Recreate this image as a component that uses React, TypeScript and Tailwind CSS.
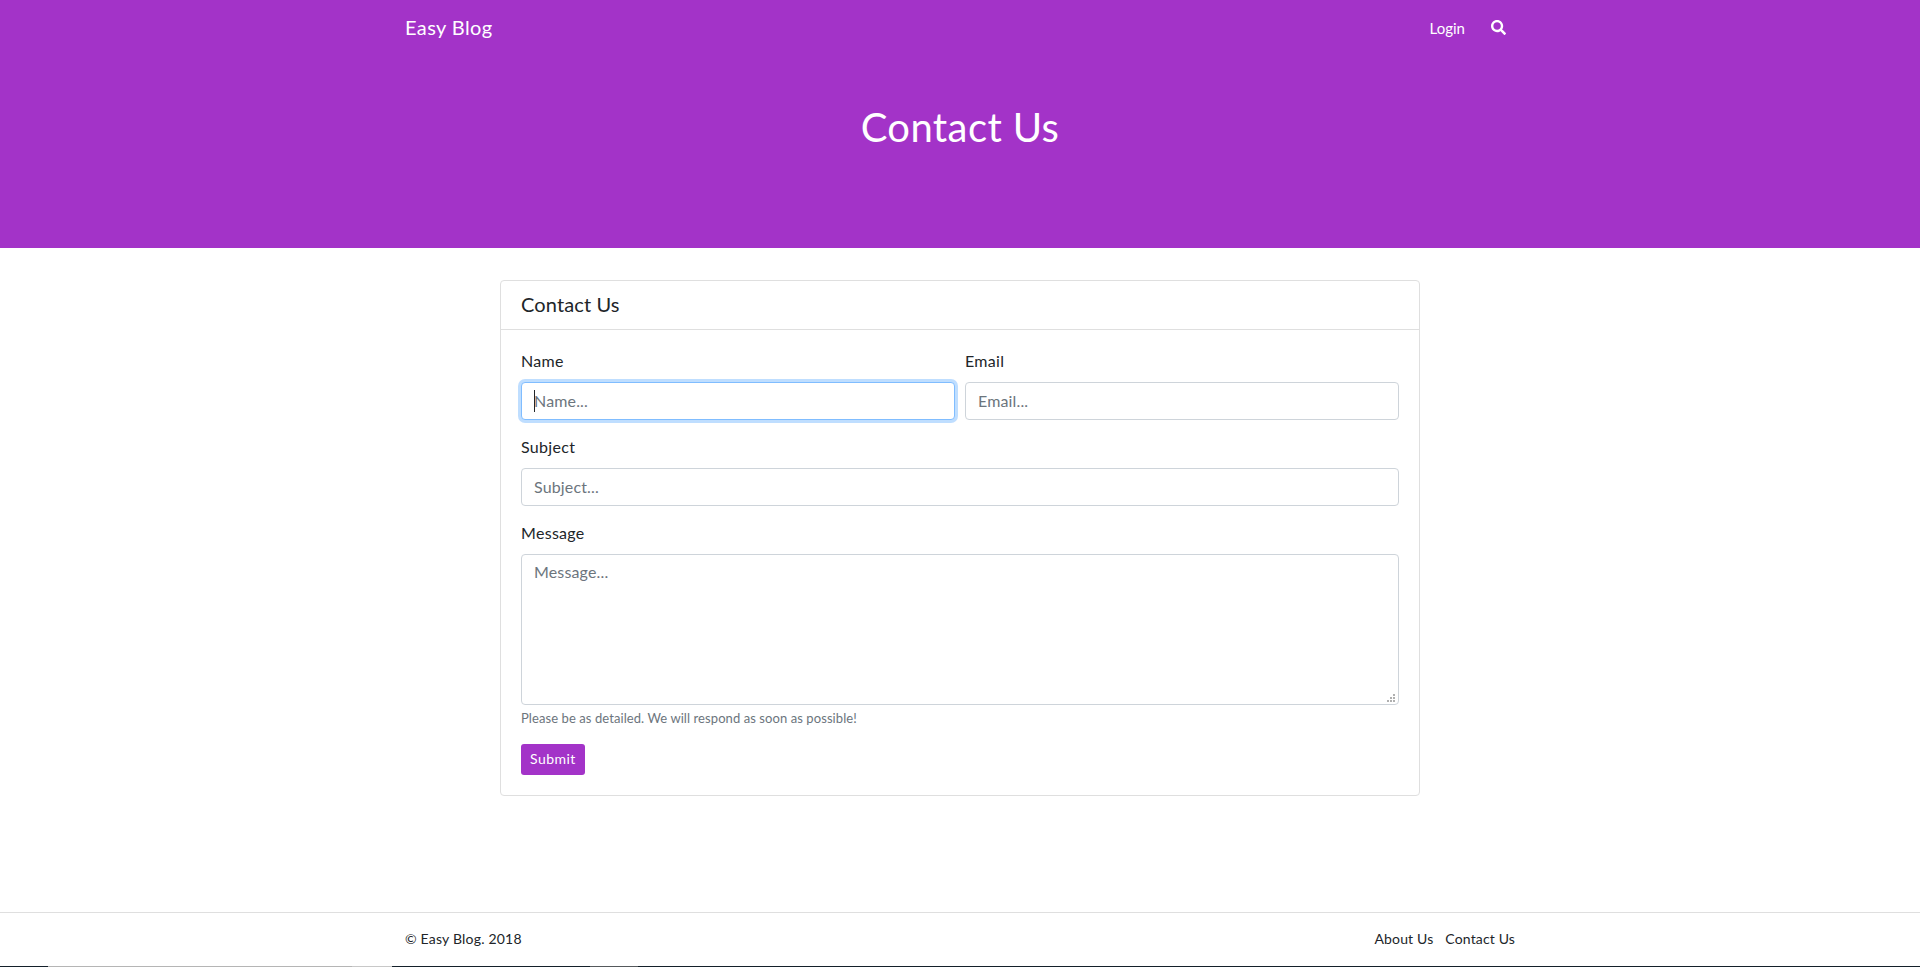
const font = "font-['Lato','Noto_Sans',sans-serif]";

function Field({ label, placeholder, focused }: { label: string; placeholder: string; focused?: boolean }) {
  return (
    <div className="min-w-0 flex-1">
      <label className="mb-2 block h-6 text-base leading-[22px] tracking-[0.3px] text-[#212529]">{label}</label>
      <div className="relative">
        <input
          placeholder={placeholder}
          className={
            focused
              ? "block h-[38px] w-full rounded border border-[#80bdff] bg-white px-3 pb-[2px] text-base tracking-[0.15px] text-[#495057] shadow-[0_0_0_3px_rgba(0,123,255,0.25)] outline-none placeholder:text-[#6c757d]"
              : "block h-[38px] w-full rounded border border-[#ced4da] bg-white px-3 pb-[2px] text-base tracking-[0.15px] text-[#495057] outline-none placeholder:text-[#6c757d]"
          }
        />
        {focused && <span className="absolute left-[13px] top-[8px] h-[22px] w-px bg-[#212529]" />}
      </div>
    </div>
  );
}

export default function App() {
  return (
    <div className={`flex min-h-[967px] flex-col bg-white text-[#212529] ${font}`}>
      <header className="h-[248px] bg-[#a333c8] text-white">
        <div className="mx-auto w-[1140px]">
          <nav className="flex h-14 items-center justify-between px-[15px]">
            <a className="pb-[2px] text-xl tracking-[0.4px]">Easy Blog</a>
            <div className="flex items-center gap-[26px] pr-[9px]">
              <a className="text-[15px]">Login</a>
              <svg viewBox="0 0 512 512" className="mb-[2px] h-[15px] w-[15px] fill-white">
                <path d="M505 442.700L405.300 343c-4.500-4.500-10.600-7-17-7H372c27.600-35.300 44-79.700 44-128C416 93.100 322.900 0 208 0S0 93.100 0 208s93.100 208 208 208c48.300 0 92.700-16.400 128-44v16.300c0 6.400 2.500 12.500 7 17l99.700 99.700c9.400 9.400 24.600 9.400 33.900 0l28.300-28.300c9.400-9.400 9.400-24.600.1-34zM208 336c-70.700 0-128-57.200-128-128 0-70.700 57.200-128 128-128 70.700 0 128 57.200 128 128 0 70.700-57.200 128-128 128z" />
              </svg>
            </div>
          </nav>
          <h1 className="mt-[47px] text-center text-[40px] leading-[48px] tracking-[0.4px]">Contact Us</h1>
        </div>
      </header>

      <main className="flex-1 pt-8">
        <div className="mx-auto w-[920px] rounded border border-[#dfdfdf]">
          <div className="flex h-[49px] items-center border-b border-[#dfdfdf] px-5 pb-[2px] text-xl tracking-[0.12px]">Contact Us</div>
          <form className="p-5">
            <div className="flex gap-[10px]">
              <Field label="Name" placeholder="Name..." focused />
              <Field label="Email" placeholder="Email..." />
            </div>
            <div className="mt-4">
              <Field label="Subject" placeholder="Subject..." />
            </div>
            <div className="mt-4">
              <label className="mb-2 block h-6 text-base leading-[22px] tracking-[0.3px]">Message</label>
              <div className="relative">
                <textarea
                  placeholder="Message..."
                  className="block h-[151px] w-full resize-none rounded border border-[#ced4da] px-3 pb-[6px] pt-[5px] text-base leading-6 tracking-[0.15px] outline-none placeholder:text-[#6c757d]"
                />
                <svg viewBox="0 0 9 9" className="absolute bottom-[2px] right-[4px] h-[9px] w-[9px] fill-[#b0b0b0]">
                  <rect x="7" y="0" width="2" height="2" />
                  <rect x="4" y="3" width="2" height="2" />
                  <rect x="7" y="3" width="2" height="2" />
                  <rect x="1" y="6" width="2" height="2" />
                  <rect x="4" y="6" width="2" height="2" />
                  <rect x="7" y="6" width="2" height="2" />
                </svg>
              </div>
              <p className="mt-1 h-[19px] text-[13px] leading-[19px] tracking-[0.08px] text-[#6c757d]">
                Please be as detailed. We will respond as soon as possible!
              </p>
            </div>
            <button type="button" className="mt-4 h-[31px] rounded-[3px] bg-[#a333c8] px-[9px] pb-[2px] text-sm tracking-[0.45px] text-white">
              Submit
            </button>
          </form>
        </div>
      </main>

      <footer className="flex h-[54px] justify-center border-t border-[#dfdfdf]">
        <div className="flex w-[1140px] items-center justify-between px-[15px] pb-[2px] text-sm tracking-[0.2px]">
          <span>© Easy Blog. 2018</span>
          <div className="flex gap-[12px] tracking-[0.15px]">
            <a>About Us</a>
            <a>Contact Us</a>
          </div>
        </div>
      </footer>
      <div className="flex h-px bg-[#14202a]">
        <div className="ml-[48px] h-full w-[304px] bg-[#b5b5b5]" />
        <div className="h-full w-[40px] bg-[#c8c8c8]" />
        <div className="ml-[198px] h-full w-[48px] bg-[#55595c]" />
      </div>
    </div>
  );
}
